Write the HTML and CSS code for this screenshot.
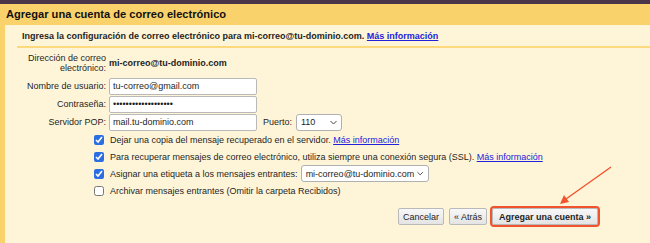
FILE: index.html
```html
<!DOCTYPE html>
<html>
<head>
<meta charset="utf-8">
<title>Agregar una cuenta de correo electrónico</title>
<link rel="stylesheet" href="styles.css">
</head>
<body>
<div class="topbar"></div>
<div class="title">Agregar una cuenta de correo electrónico</div>
<div class="panel">
  <div class="intro">Ingresa la configuración de correo electrónico para mi-correo@tu-dominio.com. <a href="#">Más información</a></div>
  <div class="sep"></div>
  <table class="form">
    <tr class="row-addr">
      <td class="lbl lbl-two">Dirección de correo<br>electrónico:</td>
      <td class="val"><b>mi-correo@tu-dominio.com</b></td>
    </tr>
    <tr>
      <td class="lbl">Nombre de usuario:</td>
      <td class="val"><input type="text" class="txt" value="tu-correo@gmail.com"></td>
    </tr>
    <tr>
      <td class="lbl">Contraseña:</td>
      <td class="val"><input type="password" class="txt" value="xxxxxxxxxxxxxxxxxxx"></td>
    </tr>
    <tr>
      <td class="lbl">Servidor POP:</td>
      <td class="val">
        <div class="pop">
          <input type="text" class="txt" value="mail.tu-dominio.com">
          <span class="port">Puerto:</span>
          <span class="sel sel-port">110 <svg class="chev" width="7" height="5" viewBox="0 0 7 5"><polyline points="0.5,1 3.5,4 6.5,1" fill="none" stroke="#444" stroke-width="1"/></svg></span>
        </div>
      </td>
    </tr>
  </table>
  <div class="checks">
    <div class="chk"><input type="checkbox" checked><span>Dejar una copia del mensaje recuperado en el servidor. <a href="#">Más información</a></span></div>
    <div class="chk"><input type="checkbox" checked><span>Para recuperar mensajes de correo electrónico, utiliza siempre una conexión segura (SSL). <a href="#">Más información</a></span></div>
    <div class="chk"><input type="checkbox" checked><span>Asignar una etiqueta a los mensajes entrantes:</span>
      <span class="sel sel-label">mi-correo@tu-dominio.com <svg class="chev" width="7" height="5" viewBox="0 0 7 5"><polyline points="0.5,1 3.5,4 6.5,1" fill="none" stroke="#444" stroke-width="1"/></svg></span></div>
    <div class="chk"><input type="checkbox"><span>Archivar mensajes entrantes (Omitir la carpeta Recibidos)</span></div>
  </div>
  <div class="buttons">
    <button class="btn">Cancelar</button>
    <button class="btn">« Atrás</button>
    <button class="btn btn-main">Agregar una cuenta »</button>
  </div>
</div>
<svg class="arrow" width="650" height="243" viewBox="0 0 650 243">
  <line x1="611" y1="167" x2="566" y2="199" stroke="#f2542d" stroke-width="1.4"/>
  <polygon points="560,204 564,195 569,202" fill="#f2542d"/>
</svg>
</body>
</html>
```
FILE: styles.css
```css
body {
  margin: 0;
  font-family: "Liberation Sans", Arial, sans-serif;
  font-size: 9px;
  color: #1e1e1e;
  background: #fef5d9;
  height: 243px;
  overflow: hidden;
}

.topbar {
  height: 4px;
  background: #4b3649;
}

.title {
  background: #f9d26c;
  height: 21px;
  line-height: 20px;
  padding-left: 6px;
  font-size: 11.1px;
  font-weight: bold;
  color: #111;
}

.panel {
  border-left: 5px solid #f9d26c;
  background: #fef5d9;
  height: 220px;
  padding-left: 12px;
}

.intro {
  font-weight: bold;
  padding: 5px 0 0 5px;
  line-height: 12px;
  height: 12px;
}

a {
  color: #2222dd;
}

.sep {
  height: 2px;
  background: #fbd97c;
  margin-top: 4px;
}

.form {
  border-collapse: collapse;
}

.form td {
  padding: 0;
  height: 18px;
  vertical-align: middle;
}

.form .row-addr td {
  height: 28px;
}

.form .lbl {
  text-align: right;
  width: 89px;
  padding-right: 3px;
  white-space: nowrap;
}

.form .lbl-two {
  line-height: 10px;
  padding-top: 1px;
}

.val b {
  font-size: 9px;
}

.pop {
  display: flex;
  align-items: center;
}

.txt {
  box-sizing: border-box;
  width: 148px;
  height: 17px;
  margin: 0;
  padding: 0 3px;
  border: 1px solid #b9b9b9;
  border-radius: 2px;
  background: #fff;
  font-family: "Liberation Sans", Arial, sans-serif;
  font-size: 9px;
  color: #1e1e1e;
  vertical-align: middle;
}

.port {
  margin: 0 4px 0 6px;
}

.sel {
  display: inline-flex;
  align-items: center;
  justify-content: space-between;
  box-sizing: border-box;
  height: 17px;
  padding: 0 4px 0 4px;
  border: 1px solid #b0b0b0;
  border-radius: 3px;
  background: #fff;
  color: #1e1e1e;
}

.sel-port {
  width: 46px;
}

.sel-label {
  width: 128px;
  margin-left: 3px;
}

.chev {
  margin-left: 3px;
}

.checks {
  padding-left: 77px;
}

.chk {
  display: flex;
  align-items: center;
  height: 17px;
  white-space: nowrap;
}

.chk input {
  width: 10px;
  height: 10px;
  margin: 0 6px 0 0;
  accent-color: #2b6de3;
}

.buttons {
  display: flex;
  justify-content: flex-end;
  gap: 5px;
  margin-top: 9px;
  padding-right: 52px;
}

.btn {
  font-family: "Liberation Sans", Arial, sans-serif;
  font-size: 9px;
  color: #1e1e1e;
  height: 17px;
  padding: 0 4px;
  background: linear-gradient(#f8f8f8, #e4e4e4);
  border: 1px solid #b9b9b9;
  border-radius: 2px;
}

.btn-main {
  font-weight: bold;
  padding: 0 6px;
  outline: 2px solid #f0532e;
  outline-offset: 0;
}

.arrow {
  position: absolute;
  left: 0;
  top: 0;
  pointer-events: none;
}
```
